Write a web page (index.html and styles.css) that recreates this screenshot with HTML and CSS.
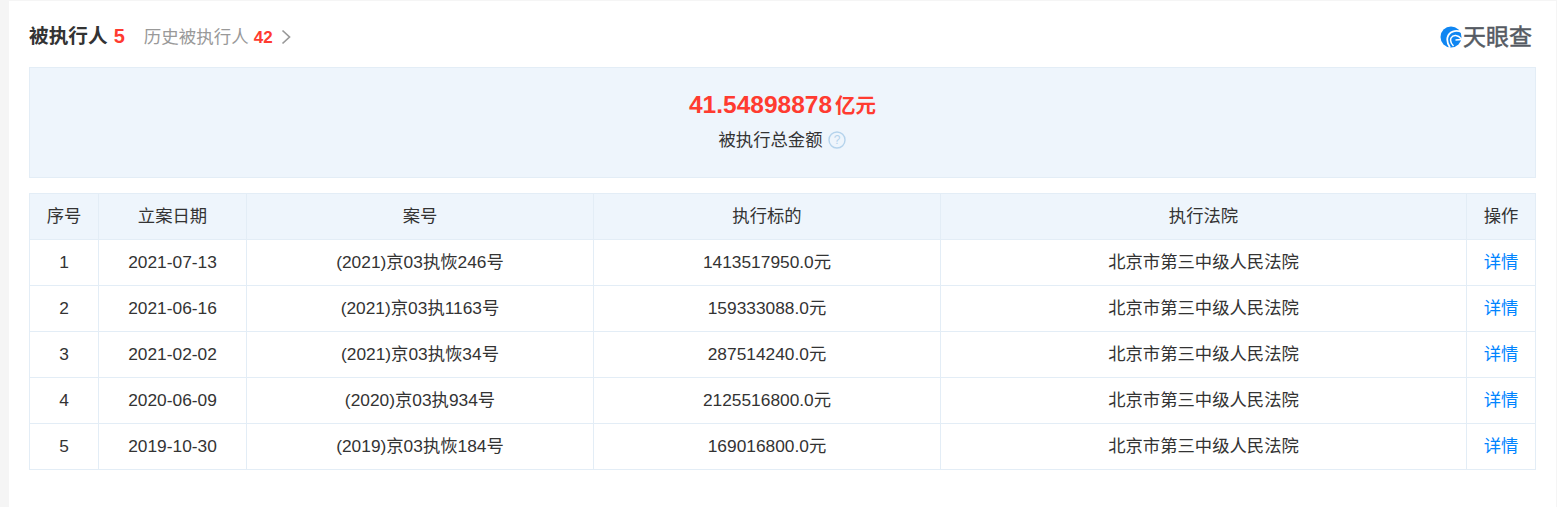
FILE: index.html
```html
<!DOCTYPE html>
<html lang="zh-CN">
<head>
<meta charset="utf-8">
<title>被执行人</title>
<link rel="stylesheet" href="styles.css">
</head>
<body>
<main class="card">
  <header class="head">
    <div class="titles">
      <h2 class="title">被执行人</h2>
      <span class="count">5</span>
      <a class="history">历史被执行人</a>
      <span class="hcount">42</span>
      <svg class="chev" width="10" height="16" viewBox="0 0 10 16"><path d="M1.500 1.500 8.500 8l-7 6.500" fill="none" stroke="#999" stroke-width="1.700"/></svg>
    </div>
    <div class="logo">
      <svg width="22" height="22" viewBox="0 0 22 22">
        <circle cx="11" cy="11" r="10.500" fill="#0f86f2"/>
        <path d="M21.500 6C15.500 3.500 9 5.500 7.500 11.500 6.800 15 7.800 18.500 10 21.500" fill="none" stroke="#fff" stroke-width="1.800"/>
        <path d="M21.500 13C18 8.500 13 8.500 11 12c-1 2.500 0 5.500 2.500 8" fill="none" stroke="#fff" stroke-width="1.500"/>
        <path d="M21.500 13.500 15.500 14" fill="none" stroke="#fff" stroke-width="1.300"/>
      </svg>
      <span class="logotext">天眼查</span>
    </div>
  </header>
  <section class="summary">
    <div class="amount">41.54898878<span class="unit">亿元</span></div>
    <div class="label">被执行总金额
      <svg class="help" width="18" height="18" viewBox="0 0 18 18"><circle cx="9" cy="9" r="8" fill="none" stroke="#b5d3ec" stroke-width="1.400"/><text x="9" y="13" text-anchor="middle" class="helpmark">?</text></svg>
    </div>
  </section>
  <table class="grid">
    <colgroup><col class="c1"><col class="c2"><col class="c3"><col class="c3"><col class="c5"><col class="c1"></colgroup>
    <thead>
      <tr><th>序号</th><th>立案日期</th><th>案号</th><th>执行标的</th><th>执行法院</th><th>操作</th></tr>
    </thead>
    <tbody>
      <tr><td>1</td><td>2021-07-13</td><td>(2021)京03执恢246号</td><td>1413517950.0元</td><td>北京市第三中级人民法院</td><td><a class="link">详情</a></td></tr>
      <tr><td>2</td><td>2021-06-16</td><td>(2021)京03执1163号</td><td>159333088.0元</td><td>北京市第三中级人民法院</td><td><a class="link">详情</a></td></tr>
      <tr><td>3</td><td>2021-02-02</td><td>(2021)京03执恢34号</td><td>287514240.0元</td><td>北京市第三中级人民法院</td><td><a class="link">详情</a></td></tr>
      <tr><td>4</td><td>2020-06-09</td><td>(2020)京03执934号</td><td>2125516800.0元</td><td>北京市第三中级人民法院</td><td><a class="link">详情</a></td></tr>
      <tr><td>5</td><td>2019-10-30</td><td>(2019)京03执恢184号</td><td>169016800.0元</td><td>北京市第三中级人民法院</td><td><a class="link">详情</a></td></tr>
    </tbody>
  </table>
</main>
</body>
</html>
```
FILE: styles.css
```css
* { box-sizing: border-box; }
html, body { margin: 0; height: 100%; }
body {
  background: #f5f5f5;
  padding: 1px 1px 0 9px;
  overflow: hidden;
  font-family: "Liberation Sans", "Noto Sans CJK SC", sans-serif;
  font-size: 16px;
  color: #333;
}
.card {
  background: #fff;
  height: 506px;
  padding: 0 20px 0 20px;
}
.head {
  height: 66px;
  display: flex;
  justify-content: space-between;
  align-items: flex-start;
  padding-top: 21px;
}
.titles { display: flex; align-items: baseline; height: 28px; line-height: 28px; }
.title { margin: 0; font-size: 19.670px; line-height: 28px; font-weight: 700; color: #333; }
.count { margin-left: 6px; font-size: 20px; font-weight: 700; color: #ff3b30; }
.history { margin-left: 19px; font-size: 17.500px; color: #999; }
.hcount { margin-left: 5px; font-size: 17px; font-weight: 700; color: #ff3b30; }
.chev { margin: 2px 0 0 8px; align-self: center; }
.logo { display: flex; align-items: center; gap: 1px; margin-right: 4px; margin-top: 3px; height: 24px; }
.logotext { font-size: 23px; line-height: 24px; font-weight: 400; color: #555a62; -webkit-text-stroke: 0.5px #555a62; }
.summary {
  height: 111px;
  background: #eef5fc;
  border: 1px solid #e3edf6;
  text-align: center;
  padding-top: 22px;
}
.amount { font-size: 24.500px; line-height: 30px; font-weight: 700; color: #ff3b30; }
.unit { font-size: 20.500px; margin-left: 3px; }
.label { margin-top: 6px; font-size: 17.330px; line-height: 26px; color: #333; display: flex; justify-content: center; align-items: center; gap: 6px; }
.help { display: block; }
.helpmark { font-size: 12px; fill: #b5d3ec; }
.grid {
  margin-top: 15px;
  width: 1507px;
  border-collapse: collapse;
  table-layout: fixed;
}
.c1 { width: 69px; }
.c2 { width: 148px; }
.c3 { width: 347px; }
.c5 { width: 526px; }
.grid th, .grid td {
  height: 46px;
  padding: 0 0 2px 0;
  border: 1px solid #e3edf6;
  text-align: center;
  font-size: 17.330px;
  line-height: 24px;
  font-weight: 400;
  color: #333;
}
.grid th { background: #eef5fc; }
.link { color: #0084ff; }
```
